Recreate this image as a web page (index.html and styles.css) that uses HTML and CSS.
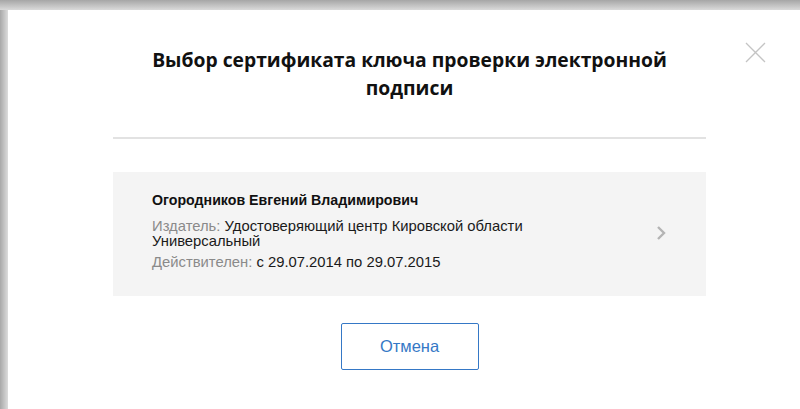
FILE: index.html
```html
<!DOCTYPE html>
<html lang="ru">
<head>
<meta charset="utf-8">
<title>Выбор сертификата</title>
<link rel="stylesheet" href="styles.css">
</head>
<body>
<div class="dialog">
  <button class="close" type="button" aria-label="Закрыть">
    <svg width="21" height="21" viewBox="0 0 21 21"><path d="M1 1 L20 20 M20 1 L1 20" stroke="#c4c4c4" stroke-width="1.3" fill="none"/></svg>
  </button>
  <div class="content">
    <h1 class="title">Выбор сертификата ключа проверки электронной подписи</h1>
    <div class="divider"></div>
    <div class="cert">
      <div class="cert-info">
        <div class="cert-name">Огородников Евгений Владимирович</div>
        <div class="cert-issuer"><span class="label">Издатель:</span> Удостоверяющий центр Кировской области Универсальный</div>
        <div class="cert-valid"><span class="label">Действителен:</span> с 29.07.2014 по 29.07.2015</div>
      </div>
      <svg class="chevron" width="10" height="16" viewBox="0 0 10 16"><path d="M2 2 L8 8 L2 14" stroke="#b4b4b4" stroke-width="2.4" fill="none"/></svg>
    </div>
    <div class="actions">
      <button class="btn" type="button">Отмена</button>
    </div>
  </div>
</div>
</body>
</html>
```
FILE: styles.css
```css
html, body {
  margin: 0;
  padding: 0;
  height: 100%;
  overflow: hidden;
}

body {
  background:
    linear-gradient(to bottom, #a6a6a6 0, #dadada 10px, transparent 10px),
    linear-gradient(to right, #a8a8a8 0, #dcdcdc 8px, #ffffff 8px);
  padding: 10px 0 0 8px;
  box-sizing: border-box;
}

.dialog {
  position: relative;
  width: 803px;
  height: 100%;
  background: #ffffff;
  padding: 36px 105px 0;
  box-sizing: border-box;
}

.close {
  position: absolute;
  top: 32px;
  left: 737px;
  padding: 0;
  border: 0;
  background: none;
  width: 21px;
  height: 21px;
  cursor: pointer;
}

.close svg {
  display: block;
}

.title {
  margin: 0;
  padding: 0 30px;
  font-family: "Open Sans", sans-serif;
  font-weight: 700;
  font-size: 19.3px;
  line-height: 28px;
  color: #111111;
  text-align: center;
}

.divider {
  height: 2px;
  background: #e2e2e2;
  margin-top: 35px;
}

.cert {
  margin-top: 33px;
  background: #f4f4f4;
  display: flex;
  align-items: center;
  padding: 21px 40px 26px 39px;
  font-family: "Liberation Sans", Arial, sans-serif;
  font-size: 14.8px;
  line-height: 15px;
  color: #1a1a1a;
}

.cert-info {
  flex: 1;
  padding-right: 60px;
}

.cert-name {
  font-weight: 700;
  font-size: 14.2px;
  color: #111111;
}

.cert-issuer {
  margin-top: 11px;
}

.cert-valid {
  margin-top: 6px;
}

.label {
  color: #8a8a8a;
}

.chevron {
  display: block;
  margin-top: 2px;
}

.actions {
  display: flex;
  justify-content: center;
  margin-top: 27px;
}

.btn {
  width: 138px;
  height: 47px;
  border: 1px solid #3578c6;
  border-radius: 2px;
  background: #ffffff;
  color: #3578c6;
  font-family: "Liberation Sans", Arial, sans-serif;
  font-size: 16.5px;
}
```
